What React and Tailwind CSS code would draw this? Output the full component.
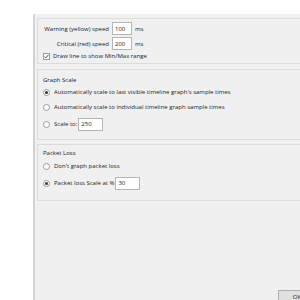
import React from 'react'

// Radio() - small windows-style radio button with label
function Radio({ checked, children }) {
  return (
    <div className="flex items-center">
      <span className="w-[7px] h-[7px] rounded-full border border-[#9a9a9a] bg-white flex items-center justify-center shrink-0">
        {checked && <span className="w-[3px] h-[3px] rounded-full bg-[#333]" />}
      </span>
      <span className="ml-[4px] whitespace-nowrap">{children}</span>
    </div>
  )
}

function Field({ value, width }) {
  return (
    <div
      className={`h-[13px] ${width} bg-white border border-[#b5b5b5] flex items-center pl-[2px] shrink-0`}
    >
      {value}
    </div>
  )
}

export default function App() {
  return (
    <div className="w-[300px] h-[300px] overflow-hidden bg-white flex flex-col font-['Open_Sans',sans-serif] text-[6px] leading-none text-[#222]">
      {/* top white strip */}
      <div className="h-[14px] shrink-0 bg-white" />

      <div className="flex flex-1 min-h-0">
        {/* left list panel */}
        <div className="w-[33px] bg-white shrink-0" />
        <div className="w-[2px] bg-[#d4d4d4] shrink-0" />

        {/* options panel */}
        <div className="flex-1 bg-[#f0f0f0] flex flex-col pt-[4px] pl-[2px] pr-[3px]">
          {/* thresholds */}
          <div className="h-[46px] border border-[#dcdcdc] pl-[5px] pt-[3px] flex flex-col">
            <div className="flex items-center">
              <span className="w-[66px] text-right whitespace-nowrap">Warning (yellow) speed</span>
              <span className="ml-[3px]"><Field value="100" width="w-[20px]" /></span>
              <span className="ml-[3px]">ms</span>
            </div>
            <div className="flex items-center mt-[2px]">
              <span className="w-[66px] text-right whitespace-nowrap">Critical (red) speed</span>
              <span className="ml-[3px]"><Field value="200" width="w-[20px]" /></span>
              <span className="ml-[3px]">ms</span>
            </div>
            <div className="flex items-center mt-[2px] h-[8px]">
              <span className="w-[7px] h-[7px] border border-[#9a9a9a] bg-white flex items-center justify-center shrink-0">
                <svg width="5" height="5" viewBox="0 0 5 5">
                  <path d="M0.6 2.6 L1.9 3.9 L4.4 0.9" fill="none" stroke="#333" strokeWidth="0.9" />
                </svg>
              </span>
              <span className="ml-[3px] whitespace-nowrap">Draw line to show Min/Max range</span>
            </div>
          </div>

          {/* graph scale */}
          <div className="h-[71px] mt-[5px] border border-[#dcdcdc] pl-[5px] flex flex-col">
            <div className="h-[12px] mt-[4px] flex items-center">Graph Scale</div>
            <div className="h-[10px] mt-[1px] flex items-center">
              <Radio checked>Automatically scale to last visible timeline graph's sample times</Radio>
            </div>
            <div className="h-[10px] mt-[5px] flex items-center">
              <Radio>Automatically scale to individual timeline graph sample times</Radio>
            </div>
            <div className="h-[14px] mt-[5px] flex items-center">
              <Radio>Scale to:</Radio>
              <span className="ml-[1px]"><Field value="250" width="w-[25px]" /></span>
            </div>
          </div>

          {/* packet loss */}
          <div className="h-[57px] mt-[4px] border border-[#dcdcdc] pl-[5px] flex flex-col">
            <div className="h-[12px] mt-[2px] flex items-center">Packet Loss</div>
            <div className="h-[10px] mt-[2px] flex items-center">
              <Radio>Don't graph packet loss</Radio>
            </div>
            <div className="h-[14px] mt-[5px] flex items-center">
              <Radio checked>Packet loss Scale at %</Radio>
              <span className="ml-[1px]"><Field value="30" width="w-[25px]" /></span>
            </div>
          </div>

          <div className="flex-1" />

          {/* dialog buttons */}
          <div className="flex h-[10px] shrink-0">
            <div className="ml-[241px] w-[38px] h-[14px] shrink-0 border border-[#adadad] bg-[#e1e1e1] flex items-center justify-center">
              OK
            </div>
          </div>
        </div>
      </div>
    </div>
  )
}
